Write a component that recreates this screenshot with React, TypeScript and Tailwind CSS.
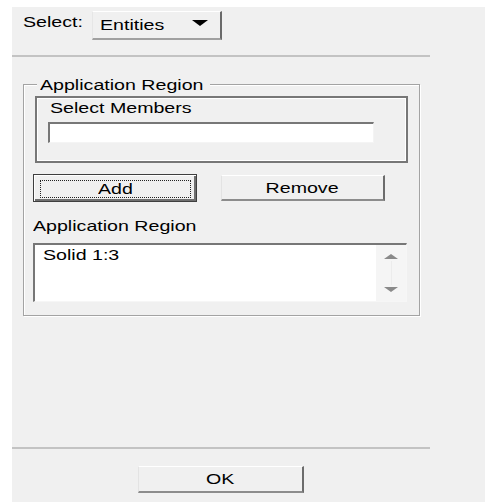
import type { ReactNode } from 'react';

// Labels are drawn with a wide horizontal stretch, like the rest of the dialog.
function Label({ children }: { children: ReactNode }) {
  return (
    <span className="inline-block whitespace-nowrap origin-left scale-x-[1.4]">
      {children}
    </span>
  );
}

function Caption({ children }: { children: ReactNode }) {
  return <span className="inline-block whitespace-nowrap scale-x-[1.4]">{children}</span>;
}

function Button({ label, className = '' }: { label: string; className?: string }) {
  return (
    <button
      className={`flex items-center justify-center bg-[#f0f0f0] border-t border-l border-t-white border-l-[#e3e3e3] border-r-2 border-b-2 border-r-[#6c6c6c] border-b-[#8c8c8c] ${className}`}
    >
      <Caption>{label}</Caption>
    </button>
  );
}

// Default button: dark outline plus a dotted focus rectangle
function DefaultButton({ label }: { label: string }) {
  return (
    <button className="flex w-[164px] h-[28px] bg-[#f0f0f0] border border-[#3f3f3f] shadow-[inset_1px_1px_0_#fff,inset_-2px_-2px_0_#6f6f6f] pl-[6px] pt-[5px] pr-[5px] pb-[3px]">
      <span className="flex flex-1 items-center justify-center border border-dotted border-[#222]">
        <Caption>{label}</Caption>
      </span>
    </button>
  );
}

function Arrow({ up }: { up?: boolean }) {
  return (
    <svg width="14" height="5" viewBox="0 0 14 5">
      <polygon points={up ? '0,5 7,0 14,5' : '0,0 7,5 14,0'} fill="#8a8a8a" />
    </svg>
  );
}

export default function App() {
  return (
    <div className="w-[485px] h-[502px] overflow-hidden bg-white pl-[12px] pt-[7px] font-['Liberation_Sans',Arial,sans-serif] text-[14px] leading-[16px] text-black">
      <div className="h-full bg-[#f0f0f0] flex flex-col">
        {/* Select row */}
        <div className="flex items-start pl-[11px] mt-[4px] h-[29px]">
          <div className="w-[69px] pt-[3px]">
            <Label>Select:</Label>
          </div>
          <div className="flex items-center justify-between w-[130px] h-[29px] pl-[7px] pr-[12px] border-t border-l border-t-white border-l-[#e6e6e6] border-r-2 border-b-2 border-r-[#6a6a6a] border-b-[#a0a0a0]">
            <Label>Entities</Label>
            <span className="mb-[5px] w-0 h-0 border-x-[8px] border-x-transparent border-t-[6px] border-t-black" />
          </div>
        </div>

        <div className="mt-[15px] w-[418px] h-[2px] bg-[#c3c3c3]" />

        {/* Application Region group */}
        <div className="relative ml-[11px] mt-[27px] w-[397px] h-[232px] border border-[#a3a3a3] shadow-[inset_1px_1px_0_#fff,1px_1px_0_#fff] pl-[9px] flex flex-col">
          <div className="absolute left-[13px] -top-[8px] w-[173px] pl-[3px] bg-[#f0f0f0]">
            <Label>Application Region</Label>
          </div>

          <div className="mt-[11px] ml-[2px] w-[373px] h-[67px] border-2 border-[#777] shadow-[inset_0_0_0_1px_#fff] pl-[13px] pt-[2px] flex flex-col">
            <Label>Select Members</Label>
            <div className="mt-[6px] -ml-[2px] w-[326px] h-[21px] bg-white border-t-2 border-l-2 border-t-[#777] border-l-[#777] border-b border-r border-b-[#f4f4f4] border-r-[#f4f4f4]" />
          </div>

          <div className="flex items-center mt-[11px] h-[28px]">
            <DefaultButton label="Add" />
            <Button label="Remove" className="ml-[24px] w-[164px] h-[26px]" />
          </div>

          <div className="mt-[16px]">
            <Label>Application Region</Label>
          </div>

          <div className="mt-[9px] flex w-[374px] h-[59px] bg-white border-t-2 border-l-2 border-t-[#777] border-l-[#777] border-b border-r border-b-[#f6f6f6] border-r-[#f6f6f6]">
            <div className="flex-1 pl-[8px] pt-[2px]">
              <Label>Solid 1:3</Label>
            </div>
            <div className="w-[30px] bg-[#f5f5f5] flex flex-col items-center pt-[9px] pb-[9px]">
              <Arrow up />
              <div className="flex-1 w-px bg-[#ececec] my-[2px]" />
              <Arrow />
            </div>
          </div>
        </div>

        <div className="mt-auto w-[418px] h-[2px] bg-[#c3c3c3]" />

        <Button label="OK" className="mt-[17px] mb-[9px] ml-[126px] w-[166px] h-[27px]" />
      </div>
    </div>
  );
}
